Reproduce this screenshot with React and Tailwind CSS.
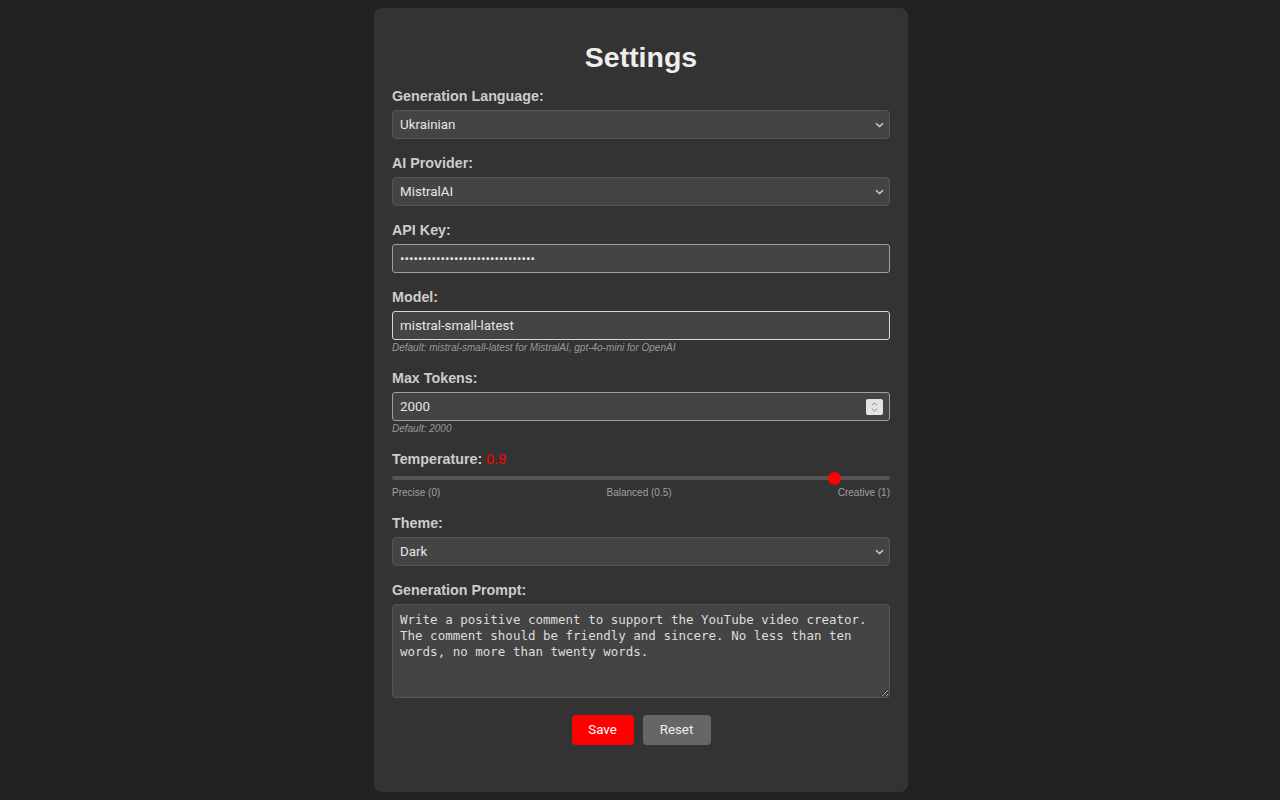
import React from "react";

const labelCls =
  "block text-[14.3px] leading-[17px] font-bold text-[#cccccc] mb-[5px] font-['Liberation_Sans',Arial,sans-serif]";
const fieldFont = "font-['Roboto','Liberation_Sans',sans-serif] text-[13.33px]";

function Chevron() {
  return (
    <svg
      className="pointer-events-none absolute right-[6px] top-1/2 -translate-y-1/2"
      width="9"
      height="6"
      viewBox="0 0 9 6"
      fill="none"
    >
      <path d="M1 1.2 L4.5 4.6 L8 1.2" stroke="#d0d0d0" strokeWidth="1.4" />
    </svg>
  );
}

function SelectField({ label, value, options }) {
  return (
    <div className="mb-[16px]">
      <label className={labelCls}>{label}</label>
      <div className="relative">
        <select
          defaultValue={value}
          className={`block w-full h-[29px] appearance-none rounded-[4px] border border-[#555555] bg-[#444444] pl-[7px] pr-6 text-[#e6e6e6] outline-none ${fieldFont}`}
        >
          {options.map((o) => (
            <option key={o}>{o}</option>
          ))}
        </select>
        <Chevron />
      </div>
    </div>
  );
}

export default function App() {
  return (
    <div className="min-h-[800px] w-full bg-[#212121] pt-[8px] pl-[2px]">
      <div className="mx-auto w-[534px] rounded-[8px] bg-[#333333] px-[18px] pt-[33px] pb-[47px]">
        <h1 className="mb-[15px] text-center text-[28.5px] leading-[32px] font-bold text-[#eeeeee] font-['Liberation_Sans',Arial,sans-serif]">
          Settings
        </h1>

        <SelectField
          label="Generation Language:"
          value="Ukrainian"
          options={["Ukrainian", "English"]}
        />
        <SelectField
          label="AI Provider:"
          value="MistralAI"
          options={["MistralAI", "OpenAI"]}
        />

        <div className="mb-[16px]">
          <label className={labelCls}>API Key:</label>
          <input
            type="password"
            readOnly
            value="xxxxxxxxxxxxxxxxxxxxxxxxxxxxxx"
            className={`block w-full h-[29px] rounded-[3px] border border-[#9e9e9e] bg-[#444444] px-[7px] text-[#e6e6e6] outline-none ${fieldFont}`}
          />
        </div>

        <div className="mb-[16px]">
          <label className={labelCls}>Model:</label>
          <input
            type="text"
            readOnly
            value="mistral-small-latest"
            className={`block w-full h-[29px] rounded-[3px] border border-[#d6d6d6] bg-[#444444] px-[7px] text-[#e6e6e6] outline-none ${fieldFont}`}
          />
          <div className="mt-[2px] text-[10px] leading-[12px] italic text-[#999999] font-['Liberation_Sans',Arial,sans-serif]">
            Default: mistral-small-latest for MistralAI, gpt-4o-mini for OpenAI
          </div>
        </div>

        <div className="mb-[16px]">
          <label className={labelCls}>Max Tokens:</label>
          <div className="flex h-[29px] w-full items-center rounded-[3px] border border-[#9e9e9e] bg-[#444444] pl-[7px] pr-[6px]">
            <input
              type="text"
              readOnly
              value="2000"
              className={`min-w-0 flex-1 bg-transparent text-[#e6e6e6] outline-none ${fieldFont}`}
            />
            <div className="flex h-[16px] w-[17px] flex-col items-center justify-center gap-[2px] rounded-[2px] bg-[#e4e4e4]">
              <svg width="7" height="4" viewBox="0 0 7 4" fill="none">
                <path d="M0.8 3.4 L3.5 0.8 L6.2 3.4" stroke="#8a8a8a" strokeWidth="1" />
              </svg>
              <svg width="7" height="4" viewBox="0 0 7 4" fill="none">
                <path d="M0.8 0.6 L3.5 3.2 L6.2 0.6" stroke="#8a8a8a" strokeWidth="1" />
              </svg>
            </div>
          </div>
          <div className="mt-[2px] text-[10px] leading-[12px] italic text-[#999999] font-['Liberation_Sans',Arial,sans-serif]">
            Default: 2000
          </div>
        </div>

        <div className="mb-[16px]">
          <label className={labelCls}>
            Temperature: <span className="font-normal text-[#ff0000]">0.9</span>
          </label>
          <div className="relative h-[9px] w-full">
            <div className="absolute left-0 right-0 top-[3px] h-[4px] rounded-full bg-[#555555]" />
            <div
              className="absolute top-[-1.5px] h-[13px] w-[13px] rounded-full bg-[#ff0000]"
              style={{ left: `calc(${0.9} * (100% - 13px))` }}
            />
          </div>
          <div className="mt-[5px] flex justify-between text-[10px] leading-[12px] text-[#a0a0a0] font-['Liberation_Sans',Arial,sans-serif]">
            <span>Precise (0)</span>
            <span>Balanced (0.5)</span>
            <span>Creative (1)</span>
          </div>
        </div>

        <SelectField label="Theme:" value="Dark" options={["Dark", "Light"]} />

        <div>
          <label className={labelCls}>Generation Prompt:</label>
          <textarea
            readOnly
            defaultValue="Write a positive comment to support the YouTube video creator. The comment should be friendly and sincere. No less than ten words, no more than twenty words."
            className="block h-[94px] w-full resize-y rounded-[4px] border border-[#555555] bg-[#444444] px-[7px] py-[7px] text-[12.5px] leading-[16px] text-[#dddddd] outline-none font-['DejaVu_Sans_Mono',monospace]"
          />
        </div>

        <div className="mt-[17px] flex justify-center gap-[9px]">
          <button
            className={`h-[30px] w-[62px] rounded-[4px] bg-[#ff0000] text-white ${fieldFont}`}
          >
            Save
          </button>
          <button
            className={`h-[30px] w-[68px] rounded-[4px] bg-[#666666] text-[#eeeeee] ${fieldFont}`}
          >
            Reset
          </button>
        </div>
      </div>
    </div>
  );
}
